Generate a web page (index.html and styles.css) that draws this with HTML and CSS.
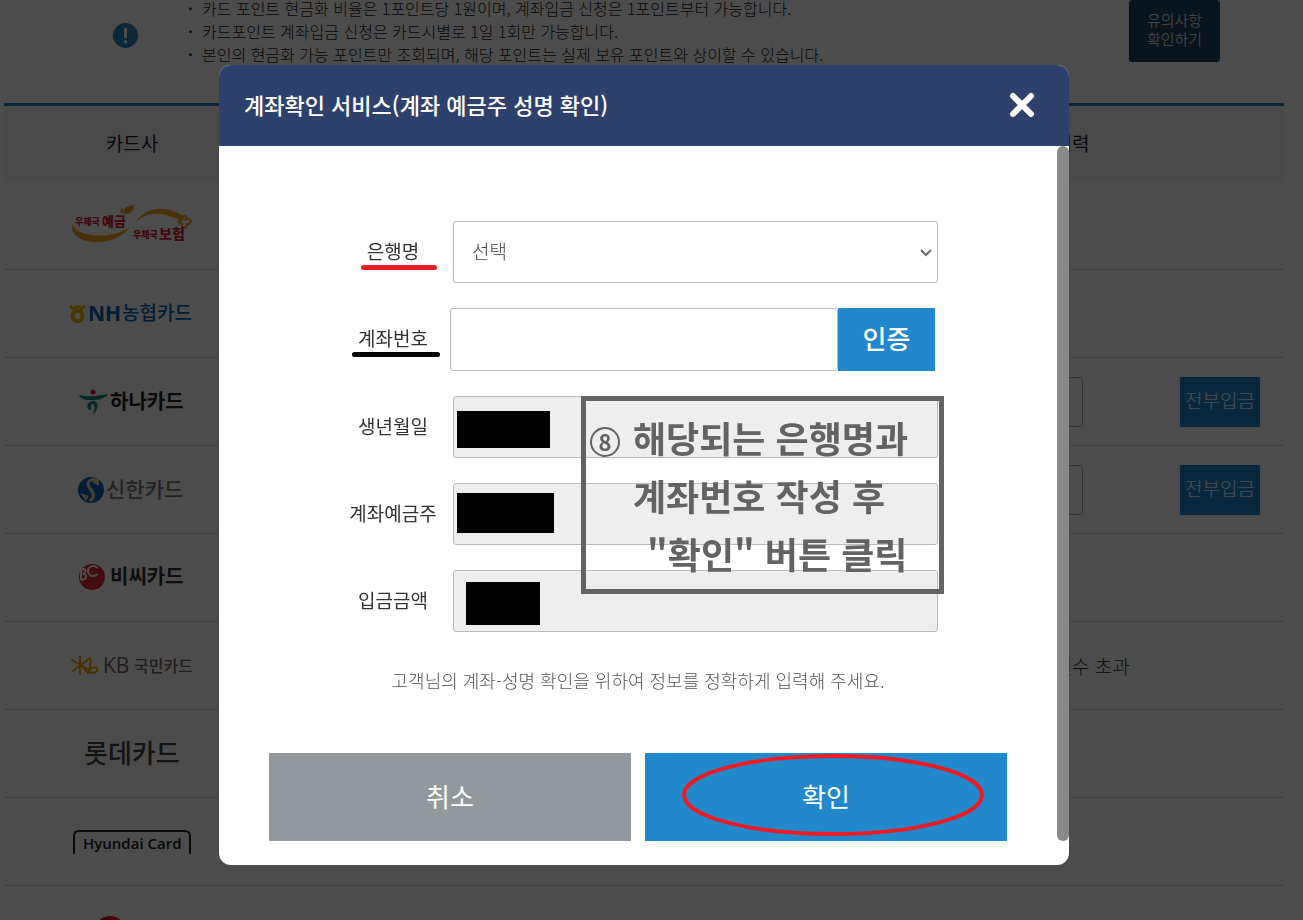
FILE: index.html
```html
<!DOCTYPE html>
<html lang="ko">

<head>
  <meta charset="UTF-8">
  <meta name="viewport" content="width=device-width, initial-scale=1.0">
  <title>계좌확인 서비스</title>
  <link rel="stylesheet" href="styles.css">
</head>

<body>
  <main class="page">
    <section class="notice">
      <div class="notice-icon">
        <svg width="25" height="25" viewBox="0 0 25 25" aria-hidden="true">
          <circle cx="12.5" cy="12.5" r="12.5" fill="#2288bb"/>
          <path d="M12.5 6v8" stroke="#fff" stroke-width="3" stroke-linecap="round"/>
          <circle cx="12.5" cy="18.7" r="1.7" fill="#fff"/>
        </svg>
      </div>
      <ul class="notice-list">
        <li>카드 포인트 현금화 비율은 1포인트당 1원이며, 계좌입금 신청은 1포인트부터 가능합니다.</li>
        <li>카드포인트 계좌입금 신청은 카드시별로 1일 1회만 가능합니다.</li>
        <li>본인의 현금화 가능 포인트만 조회되며, 해당 포인트는 실제 보유 포인트와 상이할 수 있습니다.</li>
      </ul>
      <button type="button" class="notice-button">유의사항<br>확인하기</button>
    </section>

    <table class="card-table">
      <thead>
        <tr>
          <th class="col-card">카드사</th>
          <th class="col-status"></th>
          <th></th>
          <th class="col-amount">계좌입금 입력</th>
          <th class="col-action"></th>
        </tr>
      </thead>
      <tbody>
        <tr>
          <td>
            <svg class="logo" width="128" height="44" viewBox="0 0 128 44">
              <path d="M4 20C2 32 16 39 32 38C47 37 57 30 62 23C51 30 38 33 24 31C14 30 7 26 4 20Z" fill="#f0a21c"/>
              <path d="M67 19C74 7 88 2 103 6C112 9 117 13 119 17C112 16 105 13 98 11C86 8 75 11 67 19Z" fill="#f3a81c"/>
              <path d="M56 10C54 5 58 2 66 1C66 7 62 11 56 10ZM55 9C51 9 52 5 55 4Z" fill="#ee9a1c"/>
              <path d="M113 17C112 11 119 10 119 15C124 14 124 20 119 20C119 26 112 24 114 20C109 19 109 15 113 17Z" fill="none" stroke="#f0a21c" stroke-width="2"/>
              <text x="7" y="21" font-size="9" class="logo-heavy" fill="#d91f35">우체국</text>
              <text x="34" y="22" font-size="13" class="logo-heavy" fill="#d91f35">예금</text>
              <text x="65" y="34" font-size="9" class="logo-heavy" fill="#d91f35">우체국</text>
              <text x="91" y="35" font-size="14" class="logo-heavy" fill="#d91f35">보험</text>
            </svg>
          </td>
          <td></td><td></td><td></td><td></td>
        </tr>
        <tr>
          <td>
            <svg class="logo" width="128" height="30" viewBox="0 0 128 30">
              <circle cx="9.5" cy="17" r="5" fill="none" stroke="#f5b800" stroke-width="4"/>
              <path d="M2 7L7 11M17 7L12 11M6 8h7" stroke="#f5b800" stroke-width="3"/>
              <text x="20" y="22" font-size="21" class="logo-latin logo-bold" fill="#0066b3">NH</text>
              <text x="54" y="21" font-size="19" class="logo-mid" fill="#0066b3">농협카드</text>
            </svg>
          </td>
          <td></td><td></td><td></td><td></td>
        </tr>
        <tr>
          <td>
            <svg class="logo" width="108" height="32" viewBox="0 0 108 32">
              <circle cx="15" cy="6" r="2.5" fill="#e31b48"/>
              <path d="M1 9C10 11 20 10 30 8C27 13 20 14 13 14C7 14 2 13 1 9Z" fill="#008c7a"/>
              <path d="M11 24C7 19 11 15 15 15C22 15 20 24 15 29C17 24 17 18 15 18C12 18 13 21 13 24Z" fill="#008c7a"/>
              <text x="32" y="23" font-size="20" class="logo-bold" fill="#222">하나카드</text>
            </svg>
          </td>
          <td></td><td></td>
          <td><input type="text" class="amount-input" aria-label="하나카드 입금 포인트"></td>
          <td><button type="button" class="deposit-button">전부입금</button></td>
        </tr>
        <tr>
          <td>
            <svg class="logo" width="110" height="32" viewBox="0 0 110 32">
              <circle cx="14" cy="16" r="13" fill="#0b62b0"/>
              <path d="M22 7C14 3 9 8 12 13C15 18 20 21 13 27" fill="none" stroke="#e6d9b4" stroke-width="3"/>
              <path d="M15 8l7-3v7zM3 19l9 3-3 5z" fill="#e6d9b4"/>
              <text x="29" y="23" font-size="21" class="logo-mid" fill="#77787b">신한카드</text>
            </svg>
          </td>
          <td></td><td></td>
          <td><input type="text" class="amount-input" aria-label="신한카드 입금 포인트"></td>
          <td><button type="button" class="deposit-button">전부입금</button></td>
        </tr>
        <tr>
          <td>
            <svg class="logo" width="108" height="32" viewBox="0 0 108 32">
              <circle cx="14" cy="15" r="13" fill="#e02a3c"/>
              <path d="M3 8C8 5 9 10 5 12C10 12 9 18 3 18M3 8v10" fill="none" stroke="#fff" stroke-width="2"/>
              <path d="M20 6C13 1 8 7 11 12C13 15 17 14 20 12" fill="none" stroke="#fff" stroke-width="2"/>
              <text x="32" y="22" font-size="20" class="logo-bold" fill="#333">비씨카드</text>
            </svg>
          </td>
          <td></td><td></td><td></td><td></td>
        </tr>
        <tr>
          <td>
            <svg class="logo" width="124" height="28" viewBox="0 0 124 28">
              <path d="M2 8L18 17M3 19L20 6M10 4V22M12 14L18 21M21 8L19 20C23 22 28 20 27 17C26 14 21 15 19 19" fill="none" stroke="#f5a800" stroke-width="2" stroke-linecap="round"/>
              <text x="33" y="21" font-size="21" class="logo-latin" fill="#6f655c">KB</text>
              <text x="64" y="20" font-size="16" class="logo-mid" fill="#6f655c">국민카드</text>
            </svg>
          </td>
          <td></td><td></td>
          <td>계좌입금 신청 횟수 초과</td>
          <td></td>
        </tr>
        <tr>
          <td>
            <svg class="logo" width="100" height="48" viewBox="0 0 100 48">
              <text x="2" y="33" font-size="26" class="logo-mid" fill="#444">롯데카드</text>
            </svg>
          </td>
          <td></td><td></td><td></td><td></td>
        </tr>
        <tr>
          <td>
            <svg class="logo" width="120" height="28" viewBox="0 0 120 28">
              <path d="M2 26V8C2 4 4 3 7 3H112C116 3 118 4 118 8V26" fill="none" stroke="#222" stroke-width="2"/>
              <text x="11" y="21" font-size="15" class="logo-latin logo-semi" fill="#222">Hyundai Card</text>
            </svg>
          </td>
          <td></td><td></td><td></td><td></td>
        </tr>
        <tr>
          <td>
            <svg class="logo" width="128" height="32" viewBox="0 0 128 32">
              <circle cx="42" cy="18" r="14" fill="none" stroke="#d8142e" stroke-width="4"/>
            </svg>
          </td>
          <td>카드회원이 아닙니다</td><td></td><td></td><td></td>
        </tr>
      </tbody>
    </table>
  </main>

  <div class="overlay">
    <div class="modal" role="dialog" aria-modal="true" aria-labelledby="modal-title">
      <header class="modal-header">
        <h1 id="modal-title">계좌확인 서비스(계좌 예금주 성명 확인)</h1>
        <button type="button" class="close-button" aria-label="닫기">
          <svg width="26" height="26" viewBox="0 0 26 26">
            <path d="M4 4L22 22M22 4L4 22" stroke="#fff" stroke-width="6" stroke-linecap="round"/>
          </svg>
        </button>
      </header>

      <div class="modal-body">
        <form class="modal-content">
          <div class="fields">
            <div class="field-row">
              <label for="bank"><span class="marked marked-red">은행명</span></label>
              <div class="field">
                <select id="bank">
                  <option>선택</option>
                </select>
                <svg class="chevron" width="12" height="8" viewBox="0 0 12 8">
                  <path d="M1 1L6 6L11 1" fill="none" stroke="#666" stroke-width="2"/>
                </svg>
              </div>
            </div>
            <div class="field-row field-row-account">
              <label for="account"><span class="marked marked-black">계좌번호</span></label>
              <div class="field account">
                <input type="text" id="account">
                <button type="button" class="verify-button">인증</button>
              </div>
            </div>
            <div class="field-row">
              <label for="birth">생년월일</label>
              <div class="field">
                <input type="text" id="birth" readonly>
                <span class="mask mask-birth"></span>
              </div>
            </div>
            <div class="field-row">
              <label for="holder">계좌예금주</label>
              <div class="field">
                <input type="text" id="holder" readonly>
                <span class="mask mask-holder"></span>
              </div>
            </div>
            <div class="field-row">
              <label for="amount">입금금액</label>
              <div class="field">
                <input type="text" id="amount" readonly>
                <span class="mask mask-amount"></span>
              </div>
            </div>

            <div class="guide">
              <span class="guide-number">8</span>
              <p>해당되는 은행명과<br>계좌번호 작성 후<br><span class="guide-last">"확인" 버튼 클릭</span></p>
            </div>
          </div>

          <p class="help">고객님의 계좌-성명 확인을 위하여 정보를 정확하게 입력해 주세요.</p>

          <div class="actions">
            <button type="button" class="cancel-button">취소</button>
            <button type="button" class="confirm-button">
              확인
              <svg class="ring" width="304" height="84" viewBox="0 0 304 84">
                <ellipse cx="152" cy="42" rx="149" ry="39" fill="none" stroke="#ed1c24" stroke-width="4"/>
              </svg>
            </button>
          </div>
        </form>
        <div class="scrollbar"></div>
      </div>
    </div>
  </div>
</body>
</html>
```
FILE: styles.css
```css
* {
  box-sizing: border-box;
}

body {
  margin: 0;
  height: 100vh;
  overflow: hidden;
  background-color: #fff;
  color: #333;
  font-family: "Noto Sans CJK KR", sans-serif;
  font-size: 19px;
  font-weight: 300;
}

button,
input,
select {
  font: inherit;
}

button {
  padding: 0 0 4px;
  border: none;
  color: #fff;
  cursor: pointer;
}

/* Card list behind the dialog */

.page {
  height: 100vh;
  padding: 0 19px 0 4px;
  overflow: hidden;
}

.notice {
  display: flex;
  align-items: center;
  height: 62px;
  margin-bottom: 41px;
}

.notice-icon {
  display: flex;
  width: 184px;
  padding: 8px 0 0 109px;
}

.notice-list {
  flex: 1;
  margin: 0;
  padding: 0;
  list-style: none;
  font-size: 16px;
  line-height: 23px;
  color: #222;
}

.notice-list li {
  display: flex;
}

.notice-list li::before {
  content: "·";
  width: 14px;
  font-weight: 500;
}

.notice-button {
  width: 91px;
  height: 62px;
  margin-right: 64px;
  border-radius: 3px;
  background-color: #22445f;
  font-size: 15px;
  line-height: 19px;
}

.card-table {
  width: 100%;
  border-collapse: separate;
  border-spacing: 0;
  border-top: 3px solid #2288bb;
  table-layout: fixed;
  text-align: center;
}

.card-table th {
  height: 76px;
  padding: 0 0 4px;
  background-color: #f5f6f6;
  color: #223;
  font-weight: 400;
}

.card-table td {
  height: 88px;
  padding: 0;
  border-bottom: 1px solid #d5d5d5;
}

.col-card {
  width: 20%;
}

.col-status {
  width: 22%;
}

.col-amount {
  width: 19%;
}

.col-action {
  width: 10%;
}

.logo {
  display: block;
  margin: 0 auto;
}

.logo-latin {
  font-family: "Open Sans", sans-serif;
  font-weight: 400;
}

.logo-mid {
  font-weight: 500;
}

.logo-semi {
  font-weight: 600;
}

.logo-bold {
  font-weight: 700;
}

.logo-heavy {
  font-weight: 900;
}

.amount-input {
  display: block;
  width: 98px;
  height: 50px;
  margin: 0 auto;
  border: 1px solid #aaa;
  border-radius: 3px;
}

.deposit-button {
  display: block;
  width: 80px;
  height: 50px;
  margin: 0 auto;
  background-color: #2288cc;
}

/* Dialog */

.overlay {
  position: fixed;
  inset: 0;
  display: flex;
  justify-content: center;
  align-items: flex-start;
  padding: 65px 15px 0 0;
  background-color: rgba(0, 0, 0, 0.7);
}

.modal {
  width: 850px;
  border-radius: 12px;
  background-color: #fff;
  overflow: hidden;
}

.modal-header {
  display: flex;
  justify-content: space-between;
  align-items: center;
  height: 81px;
  padding: 0 34px 0 25px;
  background-color: #2e416c;
}

.modal-header h1 {
  margin: 0;
  padding-bottom: 4px;
  color: #fff;
  font-size: 22px;
  font-weight: 500;
}

.close-button {
  display: flex;
  padding: 0 0 2px;
  background: none;
}

.modal-body {
  display: flex;
  padding-bottom: 24px;
}

.modal-content {
  flex: 1;
  padding: 75px 50px 0;
}

.scrollbar {
  width: 12px;
  border-radius: 6px;
  background-color: #888;
}

.fields {
  position: relative;
  display: flex;
  flex-direction: column;
  gap: 25px;
  width: 610px;
  margin: 0 auto;
}

.field-row {
  display: flex;
  align-items: center;
}

.field-row label {
  width: 120px;
  padding-bottom: 4px;
  font-weight: 400;
  text-align: center;
}

.field {
  position: relative;
  display: flex;
  width: 485px;
  height: 62px;
}

.field input,
.field select {
  flex: 1;
  min-width: 0;
  border: 1px solid #bbb;
  border-radius: 3px;
  background-color: #fff;
}

.field select {
  padding: 0 18px 4px;
  appearance: none;
  color: #444;
}

.field input[readonly] {
  background-color: #eee;
}

.chevron {
  position: absolute;
  top: 28px;
  right: 6px;
  pointer-events: none;
}

.field-row-account .field {
  height: 63px;
  margin-left: -3px;
}

.verify-button {
  width: 97px;
  background-color: #2288cc;
  font-size: 26px;
  font-weight: 500;
}

.help {
  margin: 34px 0 0;
  color: #555;
  font-size: 18px;
  line-height: 28px;
  text-align: center;
}

.actions {
  display: flex;
  gap: 14px;
  margin-top: 59px;
}

.actions button {
  position: relative;
  flex: 1;
  height: 88px;
  font-size: 26px;
  font-weight: 400;
}

.cancel-button {
  background-color: #93989c;
}

.confirm-button {
  background-color: #2288cc;
}

/* Guide marks drawn over the form */

.marked {
  position: relative;
}

.marked::after {
  content: "";
  position: absolute;
  bottom: -6px;
  left: -6px;
  right: -12px;
  height: 5px;
  border-radius: 3px;
}

.marked-red::after {
  right: -18px;
  background-color: #ed1c24;
}

.marked-black::after {
  background-color: #000;
}

.mask {
  position: absolute;
  background-color: #000;
}

.mask-birth {
  top: 15px;
  left: 4px;
  width: 93px;
  height: 37px;
}

.mask-holder {
  top: 10px;
  left: 4px;
  width: 97px;
  height: 40px;
}

.mask-amount {
  top: 12px;
  left: 13px;
  width: 74px;
  height: 43px;
}

.guide {
  position: absolute;
  top: 175px;
  left: 248px;
  display: flex;
  gap: 13px;
  width: 363px;
  height: 198px;
  padding: 7px 4px;
  border: 5px solid #636363;
  color: #636363;
  font-weight: 700;
}

.guide-number {
  width: 30px;
  height: 30px;
  margin-top: 19px;
  border: 2px solid #636363;
  border-radius: 50%;
  font-size: 22px;
  line-height: 24px;
  text-align: center;
}

.guide p {
  margin: 0;
  font-size: 36px;
  line-height: 58px;
  white-space: nowrap;
}

.guide-last {
  padding-left: 14px;
}

.ring {
  position: absolute;
  top: 0;
  left: 36px;
}
```
